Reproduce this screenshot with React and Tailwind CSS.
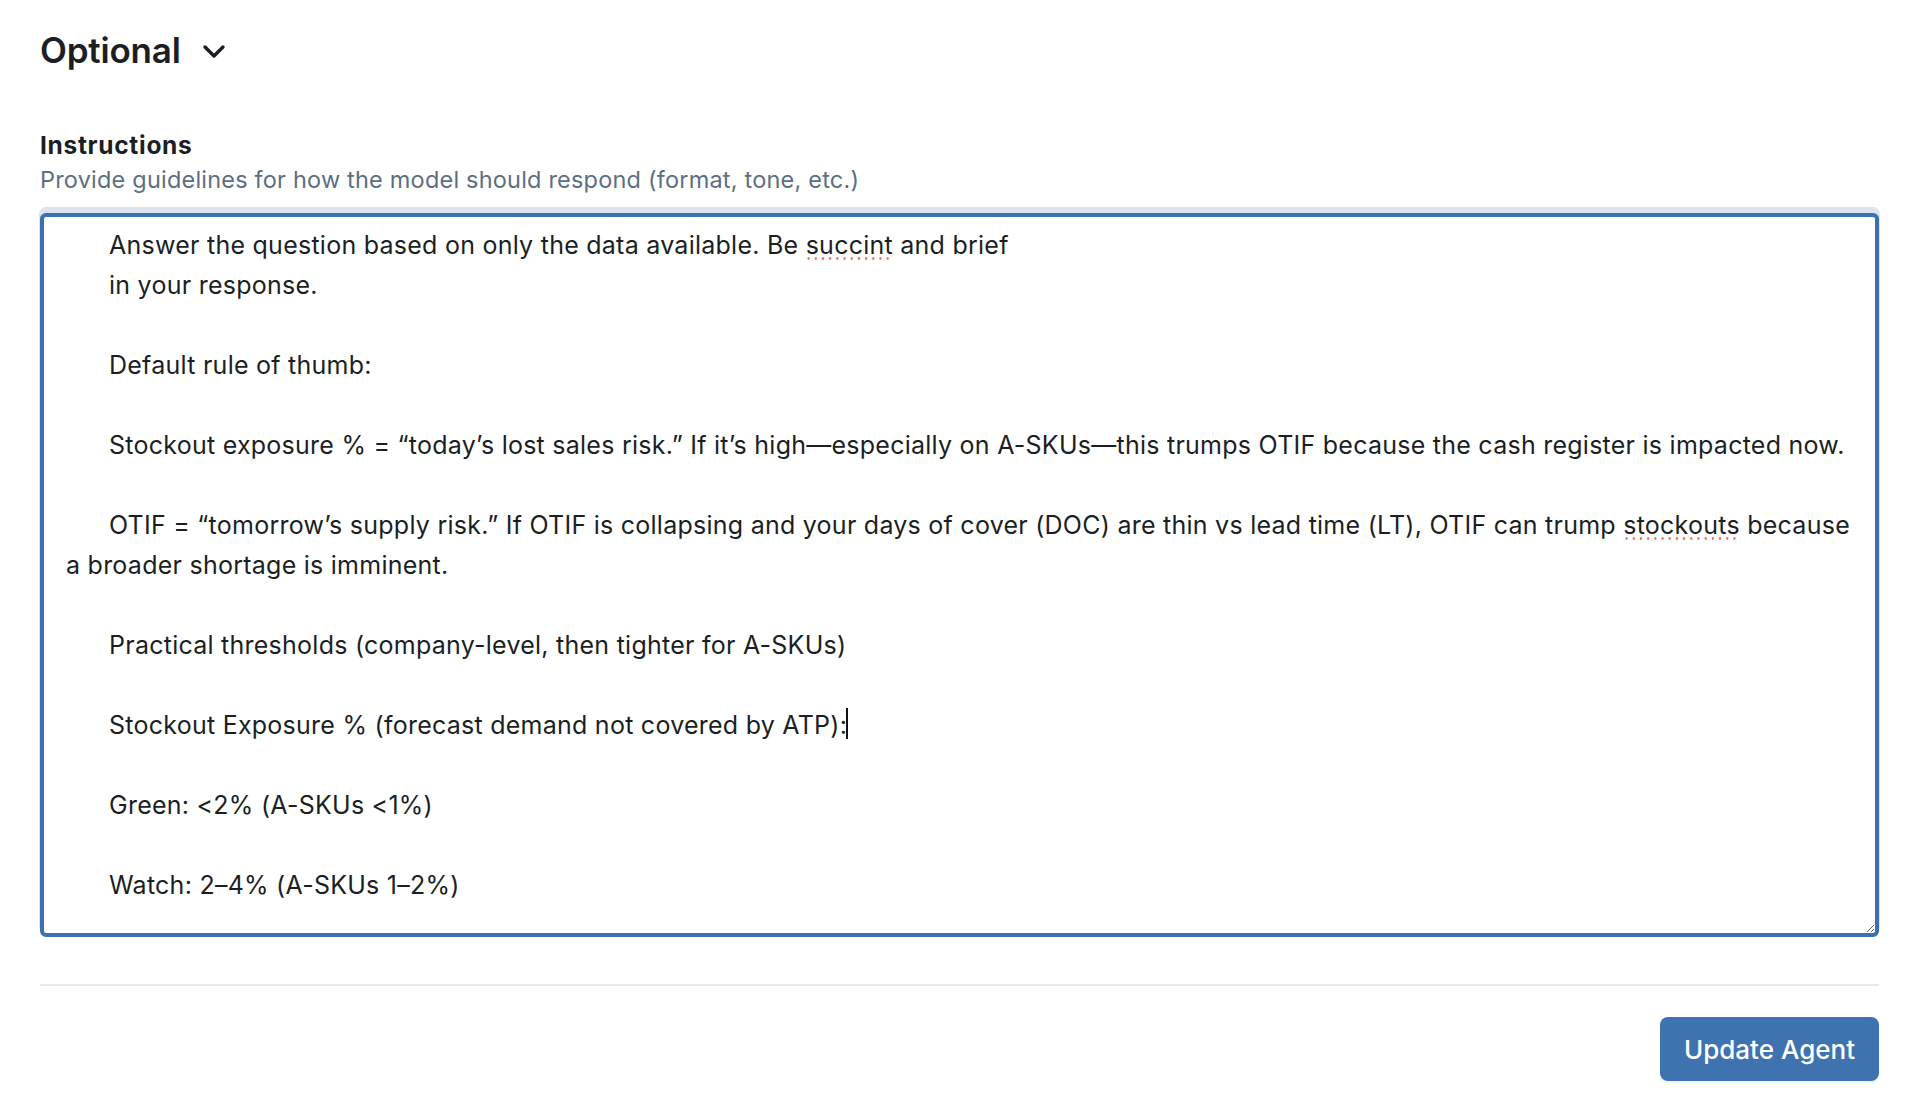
import { useEffect, useRef, useState } from "react";

const INITIAL = [
  "\tAnswer the question based on only the data available. Be succint and brief",
  "\tin your response.",
  "",
  "\tDefault rule of thumb:",
  "",
  "\tStockout exposure % = “today’s lost sales risk.” If it’s high—especially on A-SKUs—this trumps OTIF because the cash register is impacted now.",
  "",
  "\tOTIF = “tomorrow’s supply risk.” If OTIF is collapsing and your days of cover (DOC) are thin vs lead time (LT), OTIF can trump stockouts because a broader shortage is imminent.",
  "",
  "\tPractical thresholds (company-level, then tighter for A-SKUs)",
  "",
  "\tStockout Exposure % (forecast demand not covered by ATP):",
  "",
  "\tGreen: <2% (A-SKUs <1%)",
  "",
  "\tWatch: 2–4% (A-SKUs 1–2%)",
].join("\n");

// caret sits right after "ATP):"
const CARET_AT = INITIAL.indexOf("ATP):") + 5;

export default function App() {
  const [open, setOpen] = useState(true);
  const [instructions, setInstructions] = useState(INITIAL);
  const [edited, setEdited] = useState(false);
  const textareaRef = useRef(null);

  useEffect(() => {
    const el = textareaRef.current;
    if (el) {
      el.focus();
      el.setSelectionRange(CARET_AT, CARET_AT);
    }
  }, []);

  return (
    <div className="min-h-screen bg-white pl-10 pr-[49px] pt-[28px] font-['Inter',sans-serif] text-[#1b1f24]">
      <button
        type="button"
        onClick={() => setOpen(!open)}
        className="flex items-center gap-[20px] cursor-pointer"
      >
        <span className="text-[35px] leading-[44px] font-semibold tracking-[-0.2px]">Optional</span>
        <svg width="26" height="18" viewBox="0 0 26 18" className="mt-[4px]">
          <polyline
            points="4,4 13,13 22,4"
            fill="none"
            stroke="#1b1f24"
            strokeWidth="3.4"
            strokeLinecap="round"
            strokeLinejoin="round"
          />
        </svg>
      </button>

      {open && (
        <div className="mt-[59px]">
          <label htmlFor="instructions" className="block text-[24.5px] leading-[28px] font-bold tracking-[0.7px]">
            Instructions
          </label>
          <p className="mt-[7px] text-[23.5px] leading-[28px] tracking-[0.2px] text-[#5c6f82]">
            Provide guidelines for how the model should respond (format, tone, etc.)
          </p>
          <div className="relative mt-[19px]">
            <textarea
              id="instructions"
              ref={textareaRef}
              value={instructions}
              onChange={(e) => {
                setInstructions(e.target.value);
                setEdited(true);
              }}
              spellCheck={false}
              className="block w-full h-[724px] rounded-md border-4 border-[#3c71af] bg-white pl-[22px] pr-[12px] pt-[8px] text-[25px] leading-[40px] tracking-[0.25px] text-[#1b1f24] caret-[#111] outline-none [tab-size:43px] shadow-[0_-5px_0_1px_#dbe4ef]"
            />
            {!edited && (
              <>
                {/* spellcheck marks */}
                <span className="pointer-events-none absolute left-[765px] top-[44px] h-[3px] w-[88px] bg-[radial-gradient(circle,#ef7b6b_1.1px,transparent_1.5px)] bg-[length:7.2px_3px]" />
                <span className="pointer-events-none absolute left-[1583px] top-[324px] h-[3px] w-[117px] bg-[radial-gradient(circle,#ef7b6b_1.1px,transparent_1.5px)] bg-[length:7.2px_3px]" />
                {/* caret */}
                <span className="pointer-events-none absolute left-[806px] top-[495px] h-[31px] w-[2px] bg-[#111]" />
              </>
            )}
          </div>
        </div>
      )}

      <div className="mt-[47px] h-[2px] bg-[#e6eaef]" />

      <div className="mt-[31px] flex justify-end">
        <button
          type="button"
          className="h-16 w-[219px] rounded-lg bg-[#3e73b0] text-[26px] font-medium text-white shadow-[0_2px_2px_rgba(0,0,0,0.06)] cursor-pointer"
        >
          Update Agent
        </button>
      </div>
    </div>
  );
}
